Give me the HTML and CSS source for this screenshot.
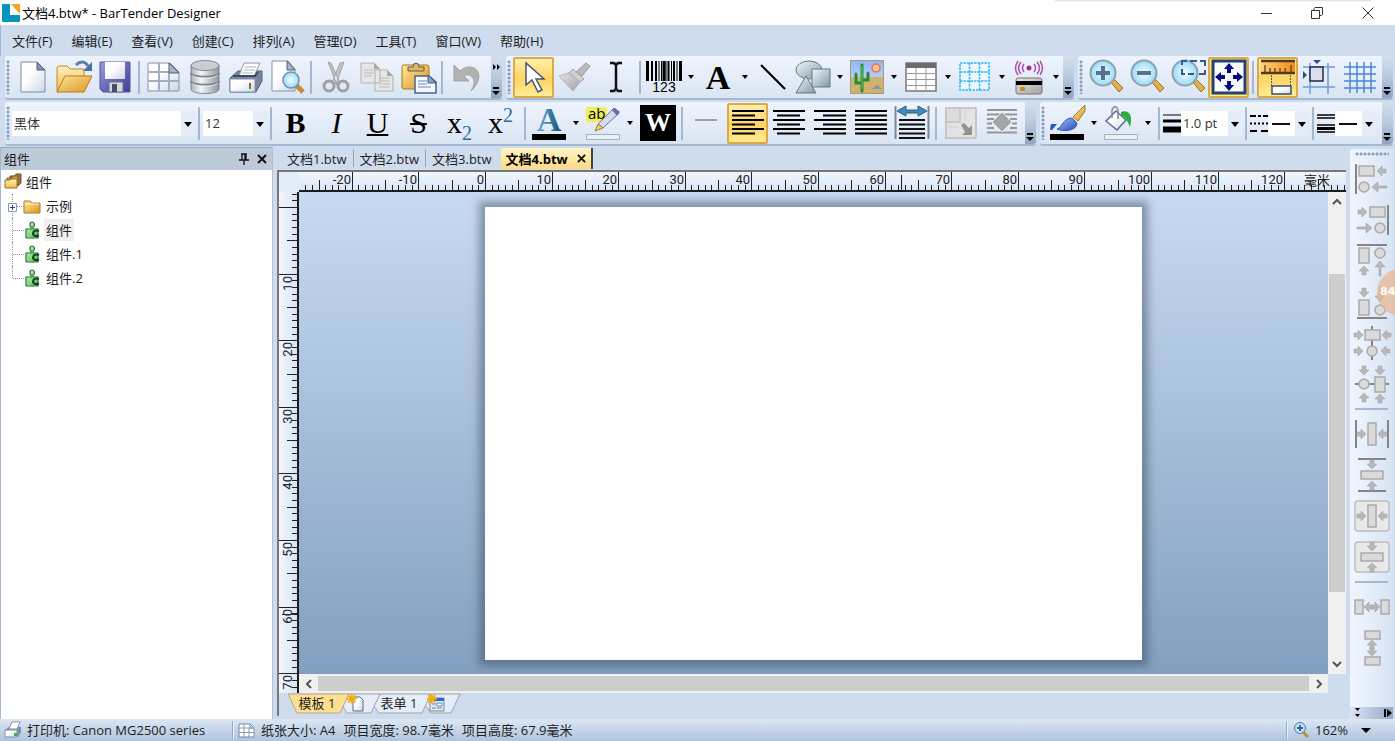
FILE: index.html
```html
<!DOCTYPE html>
<html lang="zh-CN">
<head>
<meta charset="utf-8">
<title>文档4.btw* - BarTender Designer</title>
<link rel="stylesheet" href="styles.css">
</head>
<body>
<svg class="defs" aria-hidden="true">
  <defs>
    <linearGradient id="paper" x1="0" y1="0" x2="1" y2="1"><stop offset=".4" stop-color="#fff"/><stop offset="1" stop-color="#cdd6e8"/></linearGradient>
    <linearGradient id="gold" x1="0" y1="0" x2="1" y2="1"><stop offset="0" stop-color="#ffe79a"/><stop offset="1" stop-color="#dd9420"/></linearGradient>
    <linearGradient id="goldSoft" x1="0" y1="0" x2="0" y2="1"><stop offset="0" stop-color="#fdf0c0"/><stop offset="1" stop-color="#efb94e"/></linearGradient>
    <linearGradient id="violet" x1="0" y1="0" x2="1" y2="1"><stop offset="0" stop-color="#9c9ae0"/><stop offset="1" stop-color="#3f3c94"/></linearGradient>
    <linearGradient id="steel" x1="0" y1="0" x2="1" y2="0"><stop offset="0" stop-color="#aab2b9"/><stop offset=".35" stop-color="#f4f6f8"/><stop offset="1" stop-color="#8d969e"/></linearGradient>
    <linearGradient id="shape" x1="0" y1="0" x2="1" y2="1"><stop offset="0" stop-color="#f4f8fa"/><stop offset="1" stop-color="#7f97a6"/></linearGradient>
    <linearGradient id="grey" x1="0" y1="0" x2="1" y2="1"><stop offset="0" stop-color="#e6e6e6"/><stop offset="1" stop-color="#a2a2a2"/></linearGradient>
    <linearGradient id="teal" x1="0" y1="0" x2="1" y2="0"><stop offset="0" stop-color="#67acca"/><stop offset=".5" stop-color="#3d83a6"/><stop offset="1" stop-color="#1d4763"/></linearGradient>
    <linearGradient id="blue" x1="0" y1="0" x2="1" y2="1"><stop offset="0" stop-color="#a9c6ff"/><stop offset="1" stop-color="#1c49b5"/></linearGradient>
    <linearGradient id="sky" x1="0" y1="0" x2="0" y2="1"><stop offset="0" stop-color="#8db4fa"/><stop offset="1" stop-color="#dce9fc"/></linearGradient>
    <linearGradient id="orange" x1="0" y1="0" x2="1" y2="0"><stop offset="0" stop-color="#ffd27c"/><stop offset="1" stop-color="#f08a1c"/></linearGradient>
    <linearGradient id="green" x1="0" y1="0" x2="1" y2="1"><stop offset="0" stop-color="#d5f7c9"/><stop offset="1" stop-color="#4fbb55"/></linearGradient>
    <radialGradient id="glass"><stop offset="0" stop-color="#f0fdff"/><stop offset="1" stop-color="#9bdcf6"/></radialGradient>
    <path id="arrow" d="M0 0-5-5v3h-4v4h4v3z" fill="#b8b8b8" stroke="#a4a4a4" stroke-width=".6"/>
    <path id="arrowLong" d="M0 0-6-5v4h-9v2h9v4z" fill="#b8b8b8" stroke="#a4a4a4" stroke-width=".6"/>
    <g id="lens"><path d="m22 22 3-3 10 10-4 4z" fill="#e2b04a" stroke="#9b7427"/><circle cx="15" cy="14" r="12.500" fill="url(#glass)" stroke="#8f9fae" stroke-width="2"/></g>
    <g id="puzzle"><path d="M3 8h5V6c-2-2-1-5 1-5s4 3 1 5v2h5v9H3z" fill="url(#green)" stroke="#1f7a33" stroke-width="1.200"/><path d="M16 10c-3-1-6 0-6 2.500s3 3 6 2" fill="none" stroke="#16401f" stroke-width="2"/></g>
    <path id="spark" d="M8 0v16M0 8h16M2 2l12 12M14 2 2 14" stroke="#f5ae08" stroke-width="3"/>
  </defs>
</svg>

<header class="titlebar">
  <svg class="logo" viewBox="0 0 18 18"><rect width="18" height="18" rx="1" fill="#0a93bd"/><path d="M8 0h10v11H8z" fill="#fff"/><path d="M9 0h8q1 0 1 1v9z" fill="#f9a11b"/></svg>
  <h1>文档4.btw* - BarTender Designer</h1>
  <div class="window-buttons">
    <button aria-label="最小化"><svg viewBox="0 0 12 12"><path d="M1 6.500h11"/></svg></button>
    <button aria-label="还原"><svg viewBox="0 0 12 12"><path d="M.5 3.500h8v8h-8zM3 3.500v-2l1-1h7.500v7l-1 1H9"/></svg></button>
    <button aria-label="关闭"><svg viewBox="0 0 12 12"><path d="m.5.5 11 11M11.500.5l-11 11"/></svg></button>
  </div>
</header>

<nav class="menubar">
  <button>文件(F)</button><button>编辑(E)</button><button>查看(V)</button><button>创建(C)</button><button>排列(A)</button><button>管理(D)</button><button>工具(T)</button><button>窗口(W)</button><button>帮助(H)</button>
</nav>

<div class="toolrow toolrow-top">
  <div class="toolbar bar-file">
    <i class="grip"></i>
    <button class="tool" aria-label="新建"><svg viewBox="0 0 36 36"><path d="M6 3h16l8 8v22H6z" fill="url(#paper)" stroke="#7d8ba3"/><path d="M22 3v8h8z" fill="#8795ae" stroke="#4f5f7b"/></svg></button>
    <button class="tool" aria-label="打开"><svg viewBox="0 0 36 36"><path d="M1 33V9q0-2 2-2h8l3 3h14v20z" fill="url(#goldSoft)" stroke="#c08a28"/><path d="M9 17h27L28 33H1z" fill="url(#gold)" stroke="#b57c1a"/><path d="M20 6c5-5 10-3 12 1" fill="none" stroke="#5c7fa8" stroke-width="3"/><path d="M36 3v9h-9z" fill="#4d7099"/></svg></button>
    <button class="tool" aria-label="保存"><svg viewBox="0 0 36 36"><path d="M3 3h30v30H6l-3-3z" fill="url(#violet)" stroke="#55519f"/><path d="M8 3h20v17H8z" fill="url(#paper)"/><path d="M12 23h14v10H12z" fill="#d5d8dd" stroke="#6b6e7c"/><path d="M15 25h5v8h-5z" fill="#4a4c60"/></svg></button>
    <i class="sep"></i>
    <button class="tool" aria-label="页面设置"><svg viewBox="0 0 36 36"><path d="M2 4h22l9 9v19H2z" fill="url(#paper)" stroke="#8492a8"/><path d="M13 4v28M23 13v19M2 13h21M2 22h31" stroke="#a3afc1" stroke-width="2"/><path d="M23 4v10h10z" fill="#a9b5c8" stroke="#506078"/></svg></button>
    <button class="tool" aria-label="数据库"><svg viewBox="0 0 36 36"><path d="M4 6v24c0 6 28 6 28 0V6z" fill="url(#steel)" stroke="#7d868e"/><path d="M4 14c0 5 28 5 28 0M4 22c0 5 28 5 28 0" fill="none" stroke="#7c848b" stroke-width="2"/><path d="M5 16c2 4 24 4 26 0M5 24c2 4 24 4 26 0" fill="none" stroke="#fff" opacity=".7"/><ellipse cx="18" cy="6.500" rx="14" ry="5" fill="#c9ced2" stroke="#838b92"/></svg></button>
    <button class="tool" aria-label="打印"><svg viewBox="0 0 36 36"><path d="m2 19 8-7h24v10l-6 11H2z" fill="#75859f" stroke="#526179"/><path d="m11 17 5-13h16l-6 13z" fill="#fff" stroke="#8b97aa"/><path d="M17 8h11M16 11h11M14 14h11" stroke="#aab4c4"/><path d="M2 20h25v13H2z" fill="url(#paper)" stroke="#8491a8"/><path d="M5 17h22l3-4" fill="none" stroke="#3e4a60" stroke-width="2"/><path d="M21 24h2v3h-2z" fill="#d33"/><path d="M21 27h2v3h-2z" fill="#2a2"/></svg></button>
    <button class="tool" aria-label="打印预览"><svg viewBox="0 0 36 36"><path d="M3 2h16l7 8v22H3z" fill="url(#paper)" stroke="#8492a8"/><path d="M18 2v9h8z" fill="#a9b5c8" stroke="#506078"/><path d="m27 26 7 7" stroke="#c58e34" stroke-width="5"/><circle cx="22" cy="21" r="8" fill="url(#glass)" stroke="#6e92ae" stroke-width="1.500"/></svg></button>
    <i class="sep"></i>
    <button class="tool" aria-label="剪切" disabled><svg viewBox="0 0 36 36"><path d="m10 3 3 1 9 20-3 2zM26 3l-4 1-8 20 4 1z" fill="#c2c2c2" stroke="#a4a4a4"/><circle cx="11" cy="27" r="5" fill="none" stroke="#a0a0a0" stroke-width="3"/><circle cx="25" cy="27" r="5" fill="none" stroke="#a0a0a0" stroke-width="3"/></svg></button>
    <button class="tool" aria-label="复制" disabled><svg viewBox="0 0 36 36"><path d="M2 4h13l6 6v14H2zM16 11h12l6 6v15H16z" fill="#e6e6e6" stroke="#b2b2b2"/><path d="M5 11h10M5 14h10M5 17h8M20 19h11M20 22h11M20 25h11M20 28h11" stroke="#bababa"/><path d="M15 4v6h6zM28 11v6h6z" fill="#aaa"/></svg></button>
    <button class="tool" aria-label="粘贴"><svg viewBox="0 0 36 36"><rect x="2" y="6" width="27" height="24" rx="2" fill="url(#gold)" stroke="#a87920"/><path d="M8 12V8h5q0-4 3-4t3 4h5v4z" fill="#d5b873" stroke="#6a5d3f"/><path d="M15 17h14l7 6v11H15z" fill="#f3f7ff" stroke="#4b6492" stroke-width="1.500"/><path d="M18 22h9M18 25h9M18 28h13" stroke="#6c86b8"/><path d="M28 16v8h8z" fill="#8ba1c8" stroke="#405980"/></svg></button>
    <i class="sep"></i>
    <button class="tool" aria-label="撤消" disabled><svg viewBox="0 0 36 36"><path d="m5 6 6 6c12-11 29 2 11 20C30 20 21 13 15 17l5 5H5z" fill="#b2b2b2" stroke="#a2a2a2"/></svg></button>
    <button class="more" aria-label="更多按钮"><svg viewBox="0 0 8 6"><path d="m0 0 3 3-3 3zM4 0l3 3-3 3z"/></svg></button>
  </div>

  <div class="toolbar bar-create">
    <i class="grip"></i>
    <button class="tool on" aria-label="选择"><svg viewBox="0 0 36 36"><path d="M10 4v22l6-5 6 12 4-2-6-11h8z" fill="#fff" stroke="#4a5575" stroke-width="1.500"/></svg></button>
    <button class="tool" aria-label="格式刷" disabled><svg viewBox="0 0 36 36"><path d="m29 4 4 3-8 10-6-4z" fill="#bbb" stroke="#999"/><path d="m16 10 11 10-4 3-11-9z" fill="#d0d0d0" stroke="#a3a3a3"/><path d="m12 14 11 9-7 9L2 17z" fill="url(#grey)" stroke="#b0b0b0"/></svg></button>
    <button class="tool" aria-label="文本光标"><svg viewBox="0 0 36 36"><path d="M12 4h4l2 2 2-2h4M12 32h4l2-2 2 2h4M18 5v26" fill="none" stroke="#111" stroke-width="2.500"/></svg></button>
    <i class="sep"></i>
    <button class="split" aria-label="条形码"><svg viewBox="0 0 36 36"><path d="M1.500 2v20M18 2v20M34.500 2v20" stroke="#000" stroke-width="3"/><path d="M6 2v20M10 2v20M22.500 2v20M28 2v20" stroke="#000" stroke-width="2"/><path d="M13 2v20M15.500 2v20M20 2v20M25.500 2v20M31 2v20" stroke="#000"/><text x="18" y="33" text-anchor="middle" class="t-code">123</text></svg></button>
    <button class="split" aria-label="文本"><svg viewBox="0 0 36 36"><text x="18" y="30" text-anchor="middle" class="t-serif">A</text></svg></button>
    <button class="tool" aria-label="线条"><svg viewBox="0 0 36 36"><path d="m6 6 24 24" stroke="#000" stroke-width="2"/></svg></button>
    <button class="split" aria-label="形状"><svg viewBox="0 0 36 36"><ellipse cx="14" cy="11" rx="13" ry="9" fill="url(#shape)" stroke="#61798a"/><path d="M17 10h18v18H17z" fill="url(#shape)" stroke="#61798a"/><path d="M11 17 1 34h20z" fill="url(#shape)" stroke="#61798a"/></svg></button>
    <button class="split" aria-label="图片"><svg viewBox="0 0 36 36"><path d="M1 1h34v34H1z" fill="url(#sky)"/><path d="M1 18h34v17H1z" fill="#cfb26f"/><path d="M1.500 1.500h33v33h-33z" fill="none" stroke="#a99a78"/><circle cx="27" cy="9" r="4" fill="#f7c29a" stroke="#e8714a" stroke-width="1.500"/><path d="M13 32V6M13 24H7v-9M13 21h6v-7" fill="none" stroke="#258c35" stroke-width="3" stroke-linecap="round"/><path d="M13 30V7" stroke="#6cc56b"/><path d="m23 30 5-4 5 4z" fill="#8c92a8"/></svg></button>
    <button class="split" aria-label="表格"><svg viewBox="0 0 36 36"><path d="M3 4h30v28H3z" fill="#fff" stroke="#777" stroke-width="1.500"/><path d="M3 4h30v5H3z" fill="#6b6b6b"/><path d="M13 9v23M23 9v23M3 14.500h30M3 20.500h30M3 26.500h30" stroke="#999"/></svg></button>
    <button class="split" aria-label="布局网格"><svg viewBox="0 0 36 36"><path d="M3 4h29v27H3zM12.500 4v27M22.500 4v27M3 13h29M3 22h29" fill="#eef7fd" stroke="#27b5f5" stroke-width="1.500" stroke-dasharray="2.500 1"/></svg></button>
    <button class="split" aria-label="编码器"><svg viewBox="0 0 36 36"><circle cx="18" cy="9" r="2.500" fill="#a02a9c"/><path d="M13 5q-3 4 0 8M23 5q3 4 0 8M10 3q-5 6 0 12M26 3q5 6 0 12M7 2q-5 7 0 14M29 2q5 7 0 14" fill="none" stroke="#b04fae" stroke-width="1.500"/><rect x="5" y="19" width="26" height="16" rx="2" fill="url(#grey)" stroke="#777"/><path d="M5 22h26v4H5z" fill="#000"/><rect x="9" y="28" width="5" height="4" rx="1" fill="#c98b1e"/></svg></button>
    <button class="more" aria-label="更多按钮"></button>
  </div>

  <div class="toolbar bar-view">
    <i class="grip"></i>
    <button class="tool" aria-label="放大"><svg viewBox="0 0 36 36"><use href="#lens"/><path d="M15 7v14M8 14h14" stroke="#566f92" stroke-width="4"/></svg></button>
    <button class="tool" aria-label="缩小"><svg viewBox="0 0 36 36"><use href="#lens"/><path d="M8 14h14" stroke="#566f92" stroke-width="4"/></svg></button>
    <button class="tool" aria-label="缩放选区"><svg viewBox="0 0 36 36"><use href="#lens"/><path d="M12 6V2h5M20 2h7M30 2h5v5M35 11v4h-6M24 15h-6M15 15h-3v-5" fill="none" stroke="#345b90" stroke-width="2"/></svg></button>
    <button class="tool on" aria-label="适合窗口"><svg viewBox="0 0 36 36"><path d="M2 2h32v32H2z" fill="#f7f9fe" stroke="#26426b" stroke-width="3"/><g fill="#06067e"><path d="m18 4 5 6h-3v4h-4v-4h-3zM18 32l5-6h-3v-4h-4v4h-3zM4 18l6-5v3h4v4h-4v3zM32 18l-6-5v3h-4v4h4v3z"/></g></svg></button>
    <i class="sep"></i>
    <button class="tool on" aria-label="标尺"><svg viewBox="0 0 36 36"><path d="M1 2h34v12H1z" fill="url(#orange)"/><path d="M1 2h34M1 14h34" stroke="#4d3a18" stroke-width="2.500"/><path d="M5 6v7M10 9v4M15 9v4M20 9v4M25 9v4M31 6v7" stroke="#7c4f11" stroke-width="1.500"/><path d="M11.500 16v11M30.500 16v11" stroke="#4c5a79" stroke-dasharray="2 1"/><path d="M12 27h19v8H12z" fill="url(#paper)" stroke="#394f77" stroke-width="1.500"/></svg></button>
    <button class="tool" aria-label="对齐网格"><svg viewBox="0 0 36 36"><path d="M9 4v31M27 4v31M2 8h32M2 28h32" stroke="#6c9be0" stroke-width="1.500"/><path d="M9 8h13v14H9z" fill="#d9dfed" stroke="#1c2c4b" stroke-width="1.500"/><path d="M12 1h8l-4 4zM2 12v8l4-4z" fill="#2c4f8c"/></svg></button>
    <button class="tool" aria-label="显示网格"><svg viewBox="0 0 36 36"><path d="M8 3v31M15 3v31M22 3v31M29 3v31M2 8h32M2 15h32M2 22h32M2 29h32" stroke="#4c86d8" stroke-width="1.500"/></svg></button>
    <button class="more" aria-label="更多按钮"></button>
  </div>
</div>

<div class="toolrow">
  <div class="toolbar bar-text">
    <i class="grip"></i>
    <span class="pick pick-font"><select aria-label="字体"><option>黑体</option></select></span>
    <i class="sep"></i>
    <span class="pick pick-size"><select aria-label="字号"><option>12</option></select></span>
    <i class="sep"></i>
    <button class="tool glyph bold">B</button>
    <button class="tool glyph italic">I</button>
    <button class="tool glyph under">U</button>
    <button class="tool glyph strike">S</button>
    <button class="tool glyph"><span>x<sub>2</sub></span></button>
    <button class="tool glyph"><span>x<sup>2</sup></span></button>
    <i class="sep"></i>
    <button class="split" aria-label="字体颜色"><svg viewBox="0 0 36 36"><text x="18" y="26" text-anchor="middle" class="t-serif" fill="url(#teal)">A</text><path d="M1 29h34v6H1z"/></svg></button>
    <button class="split" aria-label="突出显示"><svg viewBox="0 0 36 36"><path d="M1 2h21v15H1z" fill="#f0ee5c"/><text x="3" y="14" class="t-ab">ab</text><path d="m13 19 16-16 5 5-16 15z" fill="#d5daec" stroke="#6c7594"/><path d="m27 5 3-2 5 4-3 4z" fill="#6672ad"/><path d="m13 19 5 4-8 3z" fill="#f4d26a" stroke="#a37b22"/><path d="M1.500 29.500h33v5h-33z" fill="#e9eff7" stroke="#a6afba"/></svg></button>
    <button class="tool" aria-label="反白"><svg viewBox="0 0 36 36"><path d="M0 0h36v36H0z"/><text x="18" y="26" text-anchor="middle" class="t-w" fill="#fff">W</text></svg></button>
    <i class="sep"></i>
    <button class="tool" aria-label="横线" disabled><svg viewBox="0 0 36 36"><path d="M6 15h22" stroke="#a0a0a0" stroke-width="2"/></svg></button>
    <button class="tool on" aria-label="左对齐"><svg viewBox="0 0 36 36"><path d="M2 6h32M2 10.500h23M2 15h32M2 19.500h23M2 24h32M2 28.500h23" stroke="#000" stroke-width="2"/></svg></button>
    <button class="tool" aria-label="居中"><svg viewBox="0 0 36 36"><path d="M2 6h32M6 10.500h23M2 15h32M6 19.500h23M2 24h32M6 28.500h23" stroke="#000" stroke-width="2"/></svg></button>
    <button class="tool" aria-label="右对齐"><svg viewBox="0 0 36 36"><path d="M2 6h32M11 10.500h23M2 15h32M11 19.500h23M2 24h32M11 28.500h23" stroke="#000" stroke-width="2"/></svg></button>
    <button class="tool" aria-label="两端对齐"><svg viewBox="0 0 36 36"><path d="M2 6h32M2 10.500h32M2 15h32M2 19.500h32M2 24h32M2 28.500h32" stroke="#000" stroke-width="2"/></svg></button>
    <button class="tool" aria-label="调整宽度"><svg viewBox="0 0 36 36"><path d="M1.500 1v33M34.500 1v33" stroke="#788b9d" stroke-width="2"/><path d="m3 6 9-5v4h12V1l9 5-9 5V8H12v3z" fill="#3f8db5" stroke="#2d6482"/><path d="M5 15h26M5 19.500h26M5 24h26M5 28.500h26M5 33h26" stroke="#111" stroke-width="2"/></svg></button>
    <i class="sep"></i>
    <button class="tool" aria-label="自动调整大小" disabled><svg viewBox="0 0 36 36"><path d="M3 3h30v30H3z" fill="#e3e3e3" stroke="#bdbdbd" stroke-width="1.500"/><path d="M3 3h14v14H3z" fill="#dcdcdc" stroke="#c2c2c2" stroke-width="1.500"/><path d="M22 3v13M3 22h13" stroke="#d2d2d2"/><path d="m18 20 3-2 5 5 3-3v10H19l3-3z" fill="#929292"/></svg></button>
    <button class="tool" aria-label="文字环绕" disabled><svg viewBox="0 0 36 36"><path d="M3 5h30M3 9.500h30M3 14h7M26 14h7M3 18.500h5M28 18.500h5M3 23h7M26 23h7M3 27.500h30" stroke="#969696" stroke-width="2"/><path d="m18 7 10 10-10 10L8 17z" fill="#a5a5a5" stroke="#e8eff9"/></svg></button>
    <button class="more" aria-label="更多按钮"></button>
  </div>

  <div class="toolbar bar-line">
    <i class="grip"></i>
    <button class="split" aria-label="线条颜色"><svg viewBox="0 0 36 36"><path d="M2 19h6l-5 6h-2z" fill="#1f57c9"/><path d="M8 24c5-1 6-11 15-11l5 5c0 8-13 9-20 6z" fill="url(#blue)" stroke="#3a5aa8"/><path d="M24 12 36 0v6l-7 10z" fill="url(#gold)" stroke="#a87920"/><path d="M1 29h34v6H1z"/></svg></button>
    <button class="split" aria-label="填充颜色"><svg viewBox="0 0 36 36"><path d="M18 7c9-3 12 5 9 15-2-4-3-9-9-12z" fill="#2fae3e"/><path d="m13 6 10 9-9 10L3 16z" fill="url(#paper)" stroke="#5b6f95" stroke-width="1.500"/><path d="M9 13V5q3-7 6 0v9" fill="none" stroke="#7c8aa5" stroke-width="1.500"/><path d="M1.500 29.500h33v5h-33z" fill="#e9eff7" stroke="#a6afba"/></svg></button>
    <i class="sep"></i>
    <svg class="mini" viewBox="0 0 18 20"><path d="M0 2h18" stroke="#000"/><path d="M0 8h18" stroke="#000" stroke-width="3"/><path d="M0 16.500h18" stroke="#000" stroke-width="6"/></svg>
    <span class="pick pick-width"><select aria-label="线条粗细"><option>1.0 pt</option></select></span>
    <i class="sep"></i>
    <svg class="mini" viewBox="0 0 18 20"><path d="M0 3h6m2 0h3m2 0h5M0 18h7m4 0h7" stroke="#000" stroke-width="2"/><path d="M0 10.500h18" stroke="#000" stroke-width="2" stroke-dasharray="2 2"/></svg>
    <span class="pick pick-dash"><select aria-label="虚线样式"><option></option></select></span>
    <i class="sep"></i>
    <svg class="mini" viewBox="0 0 18 20"><path d="M0 2h18M0 5h18M0 12h18M0 19h18" stroke="#000" stroke-width="1.500"/><path d="M0 15.500h18" stroke="#000" stroke-width="3"/></svg>
    <span class="pick pick-dash"><select aria-label="复合线样式"><option></option></select></span>
    <button class="more" aria-label="更多按钮"></button>
  </div>
</div>

<main class="workspace">
  <aside class="panel">
    <header class="panel-head">
      <h2>组件</h2>
      <button aria-label="固定"><svg viewBox="0 0 10 12"><path d="M2 1h6M3 1v6M7 1v6M6 1v6M0 7h10M5 7v5" stroke="#111" stroke-width="1.300" fill="none"/></svg></button>
      <button aria-label="关闭"><svg viewBox="0 0 10 12"><path d="m1 2 8 8M9 2l-8 8" stroke="#111" stroke-width="2"/></svg></button>
    </header>
    <ul class="tree">
      <li class="root"><svg viewBox="0 0 18 18"><path d="M6 5V3h5l1-2h5v9l-3 3z" fill="#9c7a37" stroke="#6e5522"/><path d="M3 7V5h5l1-2h5v8l-2 3z" fill="#c49a48" stroke="#7e6228"/><path d="M1 7h5l1-1h6v9H1z" fill="url(#goldSoft)" stroke="#96732b"/></svg>组件</li>
      <li class="node"><i class="twig"></i><button class="expand" aria-label="展开"><svg viewBox="0 0 9 9"><path d="M.5.5h8v8h-8z" fill="#fff" stroke="#8d99ab"/><path d="M2 4.500h5M4.500 2v5" stroke="#24479b"/></svg></button><svg viewBox="0 0 18 18"><path d="M1 4h6l2 2h8v10H1z" fill="url(#gold)" stroke="#a97e2c"/><path d="M2 7h14" stroke="#fff3c8"/></svg><span>示例</span></li>
      <li class="node"><i class="twig"></i><svg viewBox="0 0 18 18"><use href="#puzzle"/></svg><span class="picked">组件</span></li>
      <li class="node"><i class="twig"></i><svg viewBox="0 0 18 18"><use href="#puzzle"/></svg><span>组件.1</span></li>
      <li class="node last"><i class="twig"></i><svg viewBox="0 0 18 18"><use href="#puzzle"/></svg><span>组件.2</span></li>
    </ul>
  </aside>

  <section class="documents">
    <div class="doc-tabs">
      <button>文档1.btw</button><button>文档2.btw</button><button>文档3.btw</button>
      <button class="current">文档4.btw<svg viewBox="0 0 10 10"><path d="m1 1 8 8M9 1 1 9" stroke="#111" stroke-width="2"/></svg></button>
    </div>
    <div class="editor">
      <div class="corner"></div>
      <svg class="ruler ruler-x" id="ruler-x"></svg>
      <svg class="ruler ruler-y" id="ruler-y"></svg>
      <div class="canvas"><div class="page"></div></div>
      <div class="scroll scroll-y">
        <button aria-label="向上滚动"><svg viewBox="0 0 10 8"><path d="m1 6 4-4 4 4"/></svg></button>
        <i class="track track-before"></i><i class="thumb"></i><i class="track track-after"></i>
        <button aria-label="向下滚动"><svg viewBox="0 0 10 8"><path d="m1 2 4 4 4-4"/></svg></button>
      </div>
      <div class="scroll scroll-x">
        <button aria-label="向左滚动"><svg viewBox="0 0 8 10"><path d="M6 1 2 5l4 4"/></svg></button>
        <i class="thumb"></i>
        <button aria-label="向右滚动"><svg viewBox="0 0 8 10"><path d="m2 1 4 4-4 4"/></svg></button>
      </div>
    </div>
    <div class="sheet-tabs">
      <svg class="sheet-shapes" viewBox="0 0 176 21"><g stroke="#a0a5ab" fill="#e4edf8"><path d="M137 12q4-11 9-11h26l-9 19h-20z"/><path d="M85 12q4-11 9-11h49l-9 19H91z"/><path d="M54 12q4-11 8-11h30l-9 19H59z"/></g><path d="M0 1h61l-9 19H9z" fill="#ffdf91" stroke="#b0a88f"/></svg>
      <button class="sheet sheet-main">模板 1</button>
      <button class="sheet sheet-add" aria-label="新建模板"><svg viewBox="0 0 18 18"><path d="M6 3h7l3 3v11H6z" fill="url(#paper)" stroke="#56698c"/><use href="#spark" transform="scale(.6)"/></svg></button>
      <button class="sheet sheet-form">表单 1</button>
      <button class="sheet sheet-add" aria-label="新建表单"><svg viewBox="0 0 18 18"><path d="M3 4h14v13H3z" fill="#e4e9f0" stroke="#7c8591"/><path d="M3 4h14v3H3z" fill="#2f66d2"/><path d="M5 10h4M5 14h4M10 9h5v3h-5zM10 14h5" fill="#fff" stroke="#5d86c4"/><use href="#spark" transform="scale(.6)"/></svg></button>
    </div>
  </section>

  <aside class="dock">
    <i class="grip grip-x"></i>
    <button class="tool" aria-label="左对齐对象" disabled><svg viewBox="0 0 36 36"><path d="M2 3v30" class="edge"/><path d="M5 5h15v10H5z" class="box"/><circle cx="10" cy="26" r="5" class="box"/><use href="#arrow" transform="translate(23 10) rotate(180)"/><use href="#arrowLong" transform="translate(18 26) rotate(180)"/></svg></button>
    <button class="tool" aria-label="右对齐对象" disabled><svg viewBox="0 0 36 36"><path d="M34 3v30" class="edge"/><path d="M16 5h15v10H16z" class="box"/><circle cx="26" cy="26" r="5" class="box"/><use href="#arrow" x="13" y="10"/><use href="#arrowLong" x="18" y="26"/></svg></button>
    <button class="tool" aria-label="顶端对齐" disabled><svg viewBox="0 0 36 36"><path d="M3 2h30" class="edge"/><path d="M5 5h10v15H5z" class="box"/><circle cx="26" cy="10" r="5" class="box"/><use href="#arrow" transform="translate(10 23) rotate(-90)"/><use href="#arrowLong" transform="translate(26 18) rotate(-90)"/></svg></button>
    <button class="tool" aria-label="底端对齐" disabled><svg viewBox="0 0 36 36"><path d="M3 34h30" class="edge"/><path d="M5 16h10v15H5z" class="box"/><circle cx="26" cy="26" r="5" class="box"/><use href="#arrow" transform="translate(10 13) rotate(90)"/><use href="#arrowLong" transform="translate(26 18) rotate(90)"/></svg></button>
    <button class="tool" aria-label="垂直居中线" disabled><svg viewBox="0 0 36 36"><path d="M18 1v34" class="edge"/><path d="M11 5h15v10H11z" class="box"/><circle cx="18" cy="26" r="5" class="box"/><use href="#arrow" x="9" y="10"/><use href="#arrow" x="9" y="26"/><use href="#arrow" transform="translate(28 10) rotate(180)"/><use href="#arrow" transform="translate(27 26) rotate(180)"/></svg></button>
    <button class="tool" aria-label="水平居中线" disabled><svg viewBox="0 0 36 36"><path d="M1 18h34" class="edge"/><path d="M21 11h10v15H21z" class="box"/><circle cx="10" cy="18" r="5" class="box"/><use href="#arrow" transform="translate(10 9) rotate(90)"/><use href="#arrow" transform="translate(26 9) rotate(90)"/><use href="#arrow" transform="translate(10 27) rotate(-90)"/><use href="#arrow" transform="translate(26 28) rotate(-90)"/></svg></button>
    <i class="rule"></i>
    <button class="tool" aria-label="水平居中" disabled><svg viewBox="0 0 36 36"><path d="M2 4v28M34 4v28" class="edge"/><path d="M14 7h8v22h-8z" class="box"/><use href="#arrow" x="12" y="18"/><use href="#arrow" transform="translate(24 18) rotate(180)"/></svg></button>
    <button class="tool" aria-label="垂直居中" disabled><svg viewBox="0 0 36 36"><path d="M4 2h28M4 34h28" class="edge"/><path d="M7 14h22v8H7z" class="box"/><use href="#arrow" transform="translate(18 12) rotate(90)"/><use href="#arrow" transform="translate(18 24) rotate(-90)"/></svg></button>
    <button class="tool" aria-label="页面水平居中" disabled><svg viewBox="0 0 36 36"><rect x="1" y="3" width="34" height="30" rx="3" class="frame"/><path d="M14 7h8v22h-8z" class="box"/><use href="#arrow" x="12" y="18"/><use href="#arrow" transform="translate(24 18) rotate(180)"/></svg></button>
    <button class="tool" aria-label="页面垂直居中" disabled><svg viewBox="0 0 36 36"><rect x="1" y="3" width="34" height="30" rx="3" class="frame"/><path d="M7 14h22v8H7z" class="box"/><use href="#arrow" transform="translate(18 12) rotate(90)"/><use href="#arrow" transform="translate(18 24) rotate(-90)"/></svg></button>
    <i class="rule"></i>
    <button class="tool" aria-label="水平分布" disabled><svg viewBox="0 0 36 36"><path d="M1 11h8v14H1zM27 11h8v14h-8z" class="box"/><use href="#arrow" x="26" y="18"/><use href="#arrow" transform="translate(10 18) rotate(180)"/></svg></button>
    <button class="tool" aria-label="垂直分布" disabled><svg viewBox="0 0 36 36"><path d="M11 1h15v8H11zM11 27h15v8H11z" class="box"/><use href="#arrow" transform="translate(18 26) rotate(90)"/><use href="#arrow" transform="translate(18 10) rotate(-90)"/></svg></button>
    <button class="dock-more" aria-label="更多按钮"><svg viewBox="0 0 8 10"><path d="M1 0h5L3.500 3zM1 6h5L3.500 9z"/></svg><svg viewBox="0 0 8 10"><path d="M0 1h2v8H0zM3 1l5 4-5 4z"/></svg></button>
  </aside>
  <div class="bubble">84</div>
</main>

<footer class="status">
  <span class="status-printer"><svg viewBox="0 0 18 18"><path d="m1 9 4-3h12v5l-3 5H1z" fill="#7d8da7"/><path d="m5 8 3-7h8l-3 7z" fill="#fff" stroke="#8b97aa"/><path d="M1 9h12v7H1z" fill="url(#paper)" stroke="#8491a8"/><path d="M10 12h3v3h-3z" fill="#2bc02b"/></svg>打印机: Canon MG2500 series</span>
  <i class="status-sep"></i>
  <span><svg viewBox="0 0 18 18"><path d="M1 3h11l4 4v9H1z" fill="#fff" stroke="#7b8aa2"/><path d="M6 3v13M11 7v9M1 7h10M1 11.500h15" stroke="#8b99af"/><path d="M11 3v5h5z" fill="#9dabc0"/></svg>纸张大小: A4</span>
  <span>项目宽度: 98.7毫米</span>
  <span>项目高度: 67.9毫米</span>
  <i class="status-sep status-end"></i>
  <button class="zoom"><svg viewBox="0 0 18 18"><path d="m11 11 5 5" stroke="#c58e34" stroke-width="3"/><circle cx="8" cy="7" r="5.500" fill="url(#glass)" stroke="#5f7fa3"/><path d="M8 4v6M5 7h6" stroke="#3d5f8e" stroke-width="2"/></svg>162%</button>
</footer>
<script src="ruler.js"></script>
</body>
</html>
```
FILE: styles.css
```css
* { box-sizing: border-box; }

:root {
  --chrome: #cfdcee;
  --line: #a4b8d2;
  --ink: #1e1e1e;
}

body {
  margin: 0;
  height: 100vh;
  display: flex;
  flex-direction: column;
  overflow: hidden;
  background: var(--chrome);
  color: var(--ink);
  font: 13px/20px "Open Sans", "Noto Sans CJK SC", sans-serif;
}

button, select { font: inherit; color: inherit; }
button { border: 0; padding: 0; background: none; }
h1, h2 { margin: 0; font: inherit; }
svg { display: block; flex: none; }
.defs { position: absolute; width: 0; height: 0; }

/* Title bar */
.titlebar {
  position: relative;
  flex: none;
  display: flex;
  align-items: center;
  height: 25px;
  padding: 0 2px;
  background: #fff;
}
.titlebar::after {
  content: "";
  position: absolute;
  top: 0;
  right: 24px;
  width: 316px;
  height: 2px;
  background: linear-gradient(#d8d8d8, #fff);
}
.titlebar h1 { margin-left: 2px; color: #000; }
.logo { width: 18px; height: 18px; }
.window-buttons { display: flex; margin-left: auto; }
.window-buttons button { width: 51px; display: grid; place-items: center; }
.window-buttons svg { width: 12px; height: 12px; fill: none; stroke: #333; }

/* Menu */
.menubar { flex: none; display: flex; gap: 1px; height: 31px; padding: 0 2px; border-left: 1px solid var(--line); }
.menubar button { padding: 0 9px; white-space: nowrap; }

/* Toolbars */
.toolrow { flex: none; display: flex; gap: 4px; height: 46px; padding: 1px 2px 1px 5px; }
.toolrow-top { height: 45px; padding-top: 0; }
.toolbar {
  display: flex;
  align-items: center;
  background: linear-gradient(#eef4fd, #dae5f3);
  border-bottom: 2px solid var(--line);
  border-radius: 3px;
}
.bar-file { flex: 0 0 497px; }
.bar-create { flex: 0 0 567px; }
.bar-text { flex: 0 0 1031px; }
.bar-view, .bar-line { flex: 1; min-width: 0; }
.grip {
  flex: none;
  width: 7px;
  height: 34px;
  background: radial-gradient(circle at 3px 2px, #8aa0c2 1px, transparent 2px) 0 0 / 7px 4px;
}
.sep { flex: none; width: 8px; height: 33px; background: linear-gradient(90deg, transparent 3px, var(--line) 3px, var(--line) 5px, transparent 5px); }
.tool, .split { flex: none; display: flex; align-items: center; height: 41px; }
.tool { width: 41px; justify-content: center; }
.split { width: 54px; padding-left: 2px; }
.tool svg, .split svg { width: 36px; height: 36px; overflow: visible; }
.split::after, .pick::after {
  content: "";
  border: 3px solid transparent;
  border-top: 4px solid #000;
  border-bottom: 0;
}
.split::after { margin-left: 6px; }
.tool.on { border: 2px solid #dba94a; border-radius: 2px; background: linear-gradient(#fff0ac, #ffd466 50%, #ffec90); }
.more {
  position: relative;
  align-self: stretch;
  flex: none;
  width: 11px;
  margin-left: auto;
  border-radius: 0 3px 3px 0;
  background: linear-gradient(#d4dfee, #b9c9df 50%, #8fa4c2);
}
.more svg { width: 8px; height: 6px; margin: 0 auto 20px; }
.more::after {
  content: "";
  position: absolute;
  right: 2px;
  bottom: 3px;
  border: 4px solid transparent;
  border-top-color: #000;
  border-bottom: 0;
}
.more::before { content: ""; position: absolute; right: 3px; bottom: 9px; width: 6px; height: 2px; background: #000; }

.glyph { font: 30px/34px "Liberation Serif", serif; color: #000; }
.glyph.bold { font-weight: bold; }
.glyph.italic { font-style: italic; }
.glyph.under { text-decoration: underline; text-decoration-thickness: 2px; }
.glyph.strike { text-decoration: line-through; text-decoration-thickness: 2px; }
.glyph sub, .glyph sup { font-size: 20px; line-height: 0; color: #2b6ca3; }
.t-code { font: 14px "Liberation Sans", sans-serif; }
.t-serif { font: bold 34px "Liberation Serif", serif; }
.t-ab { font: 15px "Open Sans", sans-serif; }
.t-w { font: bold 26px "Liberation Serif", serif; }

.pick { position: relative; flex: none; display: flex; height: 25px; background: #fff; }
.pick select { appearance: none; width: 100%; border: 0; padding: 0 14px 0 2px; background: linear-gradient(90deg, #fff calc(100% - 14px), #e3ecf7 0); color: #333; border-radius: 0; }
.pick::after { position: absolute; right: 3px; top: 11px; border-width: 5px 4px 0; }
.pick-font { width: 183px; }
.pick-size { width: 64px; }
.pick-width { width: 61px; }
.pick-dash { width: 41px; }
.pick-dash::before { content: ""; position: absolute; left: 4px; top: 12px; width: 18px; height: 2px; background: #111; }
.mini { width: 18px; height: 20px; }

/* Workspace */
.workspace { position: relative; flex: 1; min-height: 0; display: flex; }
.panel { flex: 0 0 273px; display: flex; flex-direction: column; background: #fff; border-left: 1px solid var(--line); border-right: 1px solid #b4c0cd; }
.panel-head { display: flex; align-items: center; gap: 8px; height: 23px; padding: 0 5px 0 3px; background: #bdcbd9; border-top: 1px solid #94a9c1; }
.panel-head h2 { margin-right: auto; }
.panel-head svg { width: 10px; height: 12px; }
.tree { list-style: none; margin: 0; padding: 0; }
.tree li { position: relative; display: flex; align-items: center; height: 24px; }
.tree li > svg { width: 18px; height: 18px; }
.root { gap: 4px; padding-left: 3px; }
.node { gap: 3px; padding-left: 22px; }
.node span { padding: 0 2px; line-height: 22px; }
.node .picked { background: #efefef; }
.twig { position: absolute; left: 11px; top: 0; width: 12px; height: 100%; border-left: 1px dotted #999; }
.twig::after { content: ""; position: absolute; left: 0; top: 12px; width: 11px; border-top: 1px dotted #999; }
.last .twig { height: 50%; }
.expand { position: absolute; left: 7px; top: 9px; }
.expand svg { width: 9px; height: 9px; }

.documents { flex: 1; min-width: 0; display: flex; flex-direction: column; margin-left: 4px; padding-bottom: 3px; }
.doc-tabs { flex: none; display: flex; align-items: center; height: 23px; padding-left: 4px; }
.doc-tabs button { height: 17px; line-height: 16px; padding: 0 6px; border-right: 1px solid #93a3b9; white-space: nowrap; }
.doc-tabs .current { display: flex; align-items: center; gap: 9px; height: 21px; padding: 0 5px; margin-left: 3px; background: linear-gradient(#fff3cc, #ffdb80); border-right: 2px solid #46433a; font-weight: bold; color: #000; }
.doc-tabs svg { width: 9px; height: 9px; }
.doc-tabs button:nth-last-child(2) { border-right: 0; }

.editor {
  flex: 1;
  min-height: 0;
  display: grid;
  grid-template: 20px minmax(0, 1fr) 19px / 20px minmax(0, 1fr) 18px;
  margin-right: 3px;
  border-top: 2px solid #777;
  border-left: 2px solid #777;
}
.corner { background: #e3edf9; }
.ruler { width: 100%; height: 100%; overflow: hidden; background: linear-gradient(#f1f6fe, #d9e5f4); }
.ruler-x { grid-column: 2 / 4; border-bottom: 2px solid #1c1c1c; }
.ruler-y { grid-row: 2 / 4; border-right: 2px solid #1c1c1c; background: linear-gradient(90deg, #f1f6fe, #d9e5f4); }
.ruler path { stroke: #222; fill: none; shape-rendering: crispEdges; }
.ruler text { font: 13px Roboto, "Noto Sans CJK SC", sans-serif; fill: #222; }
.canvas { display: flex; padding: 15px 186px 14px; background: linear-gradient(#c8daf2, #839fbf); overflow: hidden; }
.page { flex: 1; background: #fff; box-shadow: 0 0 8px 6px rgba(50, 65, 85, .45); }
.scroll { display: flex; background: #f0f0f0; }
.scroll svg { fill: none; stroke: #555; stroke-width: 2; }
.scroll button { flex: none; display: grid; place-items: center; }
.scroll-y { flex-direction: column; }
.scroll-y button { height: 20px; }
.scroll-y svg { width: 10px; height: 8px; }
.scroll-x button { width: 19px; }
.scroll-x svg { width: 8px; height: 10px; }
.scroll-x .thumb { flex: 1; margin: 2px 0; }
.thumb { background: #cdcdcd; }
.scroll-y .thumb { flex: 317; margin: 0 1px; }
.track-before { flex: 62; }
.track-after { flex: 62; }

.sheet-tabs { position: relative; flex: none; display: flex; height: 23px; padding-left: 13px; border-left: 2px solid #777; }
.sheet-shapes { position: absolute; left: 9px; top: 0; width: 176px; height: 21px; }
.sheet { position: relative; height: 20px; line-height: 20px; white-space: nowrap; }
.sheet-main { width: 50px; }
.sheet-add { width: 34px; padding-left: 5px; }
.sheet-add svg { width: 18px; height: 18px; }
.sheet-form { width: 46px; }

/* Alignment dock */
.dock { flex: 0 0 43px; display: flex; flex-direction: column; align-items: center; margin: 2px 2px 0 1px; background: linear-gradient(90deg, #f0f6ff, #d8e4f4); border-radius: 3px 3px 0 0; }
.grip-x { width: 34px; height: 9px; background: radial-gradient(circle at 2px 5px, #8aa0c2 1px, transparent 2px) 0 0 / 4px 9px; }
.edge { stroke: #858585; stroke-width: 2; }
.box { fill: #dadada; stroke: #aaa; stroke-width: 1.5px; }
.frame { fill: #e9e9e9; stroke: #bdbdbd; stroke-width: 1.5px; }
.rule { flex: none; width: 33px; height: 9px; background: linear-gradient(transparent 4px, var(--line) 4px, var(--line) 6px, transparent 6px); }
.dock-more { display: flex; justify-content: space-between; align-items: center; align-self: stretch; height: 12px; margin-top: auto; padding: 0 1px 0 4px; background: linear-gradient(90deg, #dbe5f3, #92a8c6); }
.dock-more svg { width: 8px; height: 10px; }
.bubble { position: absolute; right: -29px; top: 122px; width: 47px; height: 47px; padding-left: 3px; border-radius: 50%; background: rgba(232, 183, 148, .75); color: #fff; font: bold 11px/46px "DejaVu Sans", sans-serif; }

/* Status bar */
.status { flex: none; display: flex; align-items: center; gap: 8px; height: 22px; padding: 0 4px; background: linear-gradient(#dce7f5, #b0c3dc); white-space: nowrap; }
.status span, .zoom { display: flex; align-items: center; gap: 5px; }
.status svg { width: 18px; height: 18px; }
.status-printer { flex: 0 0 220px; }
.status-sep { width: 2px; height: 18px; margin-right: -4px; background: linear-gradient(90deg, #96abc7 1px, #edf3fa 1px); }
.status-end { margin-left: auto; }
.zoom::after { content: ""; margin: 0 20px 0 8px; border: 5px solid transparent; border-top-color: #000; border-bottom: 0; }
```
FILE: ruler.js
```js
const NS = "http://www.w3.org/2000/svg";
const PX_PER_MM = 6.66;

function add(svg, name, attrs, text) {
  const el = document.createElementNS(NS, name);
  for (const key in attrs) el.setAttribute(key, attrs[key]);
  if (text !== undefined) el.textContent = text;
  svg.appendChild(el);
}

function tickLength(mm) {
  if (mm % 10 === 0) return 18;
  return mm % 5 === 0 ? 10 : 5;
}

function drawHorizontal(svg, origin) {
  let d = "";
  for (let mm = -27; mm < 130; mm++) {
    const x = Math.round(origin + mm * PX_PER_MM);
    d += `M${x + 0.5} 18v${-tickLength(mm)}`;
    if (mm % 10 === 0) {
      add(svg, "text", { x: x - 1, y: 12, "text-anchor": "end" }, mm);
    }
  }
  add(svg, "path", { d: d + "M602.5 18V3" });
  add(svg, "text", { x: 1005, y: 13 }, "毫米");
}

function drawVertical(svg, origin) {
  let d = "";
  for (let mm = -2; mm < 73; mm++) {
    const y = Math.round(origin + mm * PX_PER_MM);
    d += `M18 ${y + 0.5}h${-tickLength(mm)}`;
    if (mm > 0 && mm % 10 === 0) {
      add(svg, "text", { transform: `translate(13 ${y + 2}) rotate(-90)`, "text-anchor": "end" }, mm);
    }
  }
  add(svg, "path", { d: d + "M18 422.5H3" });
}

drawHorizontal(document.getElementById("ruler-x"), 186);
drawVertical(document.getElementById("ruler-y"), 15);
```
